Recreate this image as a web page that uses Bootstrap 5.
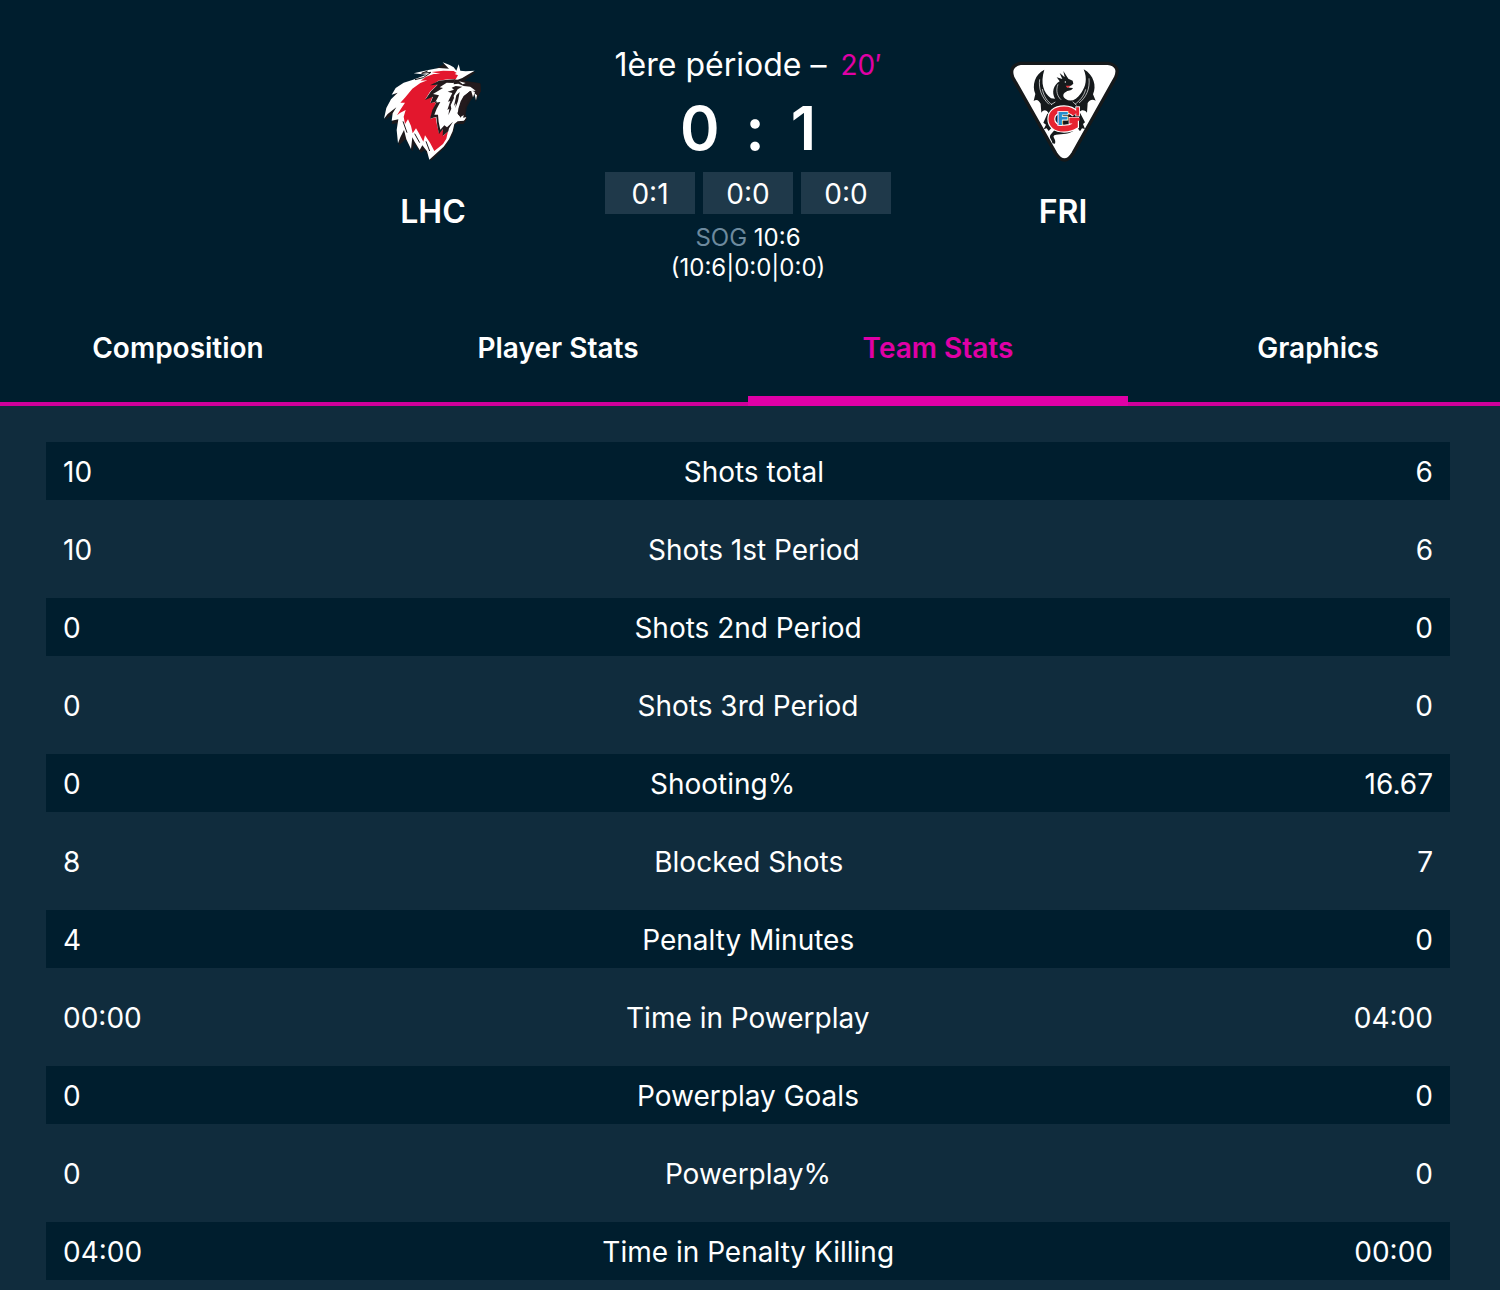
<!DOCTYPE html>
<html lang="en">
<head>
<meta charset="utf-8">
<meta name="viewport" content="width=device-width, initial-scale=1">
<title>LHC – FRI</title>
<link href="https://cdn.jsdelivr.net/npm/bootstrap@5.3.0/dist/css/bootstrap.min.css" rel="stylesheet">
<style>
  :root { --night: #001e2e; --slate: #102c3d; --tile: #1f394a; --pink: #e000a6; --line: #cf009b; }
  body { background: var(--slate); color: #fff; font-family: Inter, "Liberation Sans", sans-serif; font-size: 28px; line-height: 42px; overflow-x: hidden; }
  .match-head { background: var(--night); padding: 44px 4px 24px 0; }
  .match-inner { gap: 112px; }
  .team { width: 120px; padding-top: 8px; }
  .team svg { display: block; width: 120px; height: 120px; }
  .team-name { font-size: 32px; line-height: 40px; font-weight: 600; margin: 20px 0 0; }
  .period-title { font-size: 32px; line-height: 42px; font-weight: 400; gap: 14px; }
  .clock { font-size: 28px; color: var(--pink); }
  .score { font-size: 60px; line-height: 72px; font-weight: 600; gap: 26px; margin-top: 6px; }
  .period-box { background: var(--tile); width: 90px; height: 42px; line-height: 44px; }
  .sog { font-size: 24px; line-height: 30px; margin-top: 9px; }
  .sog-label { color: #6d8a9e; }
  .tabs { background: var(--night); border-bottom: 4px solid var(--line); }
  .tabs-inner { margin: 0 -8px 0 -12px; }
  .tabs .nav-link { color: #fff; font-weight: 600; border-radius: 0; padding: 20px 0 27px; line-height: 42px; margin-bottom: -4px; border-bottom: 10px solid transparent; }
  .tabs .nav-link.active { color: var(--pink); border-bottom-color: var(--pink); }
  .stats { padding: 36px 50px 10px 46px; }
  .stat-table { display: block; width: 100%; }
  .stat-table tbody { display: flex; flex-direction: column; gap: 20px; }
  .stat-table tr { padding: 8px 16px; height: 58px; }
  .stat-table tr:nth-child(odd) { background: var(--night); }
  .stat-table th { font-weight: 400; }
</style>
<script src="https://cdn.jsdelivr.net/npm/bootstrap@5.3.0/dist/js/bootstrap.bundle.min.js"></script>
</head>
<body>
<header class="match-head">
  <div class="match-inner d-flex justify-content-center align-items-start">
    <div class="team text-center">
      <svg viewBox="-6 6 360 360" role="img" aria-label="LHC logo">
        <path fill="#1d191b" d="M210 40L240 56 262 66 302 66 282 82 268 92 316 100 318 124 308 142 302 156 300 136 288 150 276 170 272 192 276 206 266 222 240 222 234 252 212 290 168 332 150 300 138 308 118 282 112 304 92 268 72 286 66 220 50 222 58 188 30 210 60 130Z"/>
        <path fill="#fff" d="M203 37L224 45 236 52 244 62 251 43 256 62 272 64 299 62 278 74 262 84 240 92 250 98 285 108 302 118 304 124 284 124 266 140 256 166 247 190 258 204 274 202 266 212 248 214 238 222 233 244 222 268 206 290 186 308 163 329 156 304 142 286 134 300 118 274 112 262 108 297 94 268 87 240 76 262 69 280 65 240 70 208 50 212 53 190 64 172 38 192 27 206 34 174 48 148 68 128 50 134 62 114 86 98 112 90 144 78 155 74 116 70 160 60 192 54 222 56Z"/>
        <path fill="#231a1d" d="M238 88L262 92 300 98 316 101 317 124 309 140 302 132 290 140 278 155 271 175 270 196 260 200 250 194 250 176 257 154 266 138 286 123 302 122 286 110 266 108 250 101 236 103Z"/>
        <path fill="#fff" d="M252 94L272 99 263 103ZM288 121L300 126 294 142ZM298 130L306 136 303 151ZM258 200L266 195 264 206 273 202 268 211 256 211Z"/>
        <path fill="#e3172d" d="M170 66L205 62 236 63 245 69 239 72 249 76 242 88 218 88 190 92 172 105 187 104 165 125 151 148 173 139 166 158 184 156 175 178 166 206 182 202 186 225 192 250 205 238 204 258 219 244 214 266 204 282 178 303 165 278 150 256 145 275 133 252 123 235 113 250 108 228 99 208 90 222 86 200 92 180 76 188 66 196 78 176 90 158 76 158 91 142 112 116 136 99 157 91 137 92 153 80 176 72 196 72Z"/>
        <path fill="#231a1d" d="M240 88L218 89 192 92 165 106 188 104 168 124 150 150 174 140 166 160 186 154 172 180 165 206 184 200 187 228 192 252 204 238 203 258 220 244 222 235 234 215 216 232 208 226 196 239 191 216 189 194 178 194 185 176 196 156 180 158 192 136 174 132 204 114 194 112 215 98 236 99Z"/>
        <path fill="#231a1d" d="M230 113L242 108 262 110 248 118 236 138 237 144 227 166 229 176 220 196 223 176 217 180 226 153 219 155 232 129 218 125 237 119ZM244 136L254 126 249 153 241 175 243 160 237 168Z"/>
        <path fill="none" stroke="#231a1d" stroke-width="3" d="M158 63L140 70 168 67 145 83 120 89M84 214L96 248M119 251L134 278M153 274L164 303"/>
      </svg>
      <h2 class="team-name">LHC</h2>
    </div>
    <div class="text-center match-mid">
      <div class="period-title d-flex justify-content-center align-items-center"><span>1ère période –</span><span class="clock">20′</span></div>
      <div class="score d-flex justify-content-center"><span>0</span><span>:</span><span>1</span></div>
      <div class="d-flex justify-content-center gap-2 mt-2">
        <div class="period-box">0:1</div>
        <div class="period-box">0:0</div>
        <div class="period-box">0:0</div>
      </div>
      <div class="sog"><span class="sog-label">SOG</span> 10:6<br>(10:6|0:0|0:0)</div>
    </div>
    <div class="team text-center">
      <svg viewBox="-3 0 360 360" role="img" aria-label="FRI logo">
        <path fill="#fff" stroke="#15191b" stroke-width="10" stroke-linejoin="round" d="M49 34H312Q350 40 335 76L207 304Q182 344 155 304L26 76Q14 42 49 34Z"/>
        <g fill="#15191b">
          <path d="M121 53C93 66 83 100 94 126L89 147C99 139 106 147 110 155L112 182C120 171 128 174 134 184L145 206H219L226 181C233 172 242 174 249 182L251 153C258 142 266 141 275 146L267 127C278 103 270 69 239 52C251 80 245 105 232 122C216 145 200 151 185 141C174 133 176 124 190 117C200 116 205 113 207 108L198 107 188 104 201 101 208 95 206 86 193 80 178 57 182 76 167 63 175 81 158 76 167 88C148 99 142 122 153 140L141 139C119 121 108 95 121 53Z"/>
          <path d="M130 185L118 212 126 218 119 232 128 229 134 237 145 225 219 226 228 238 234 229 243 231 237 216 243 211 228 182Z"/>
          <path d="M151 235C166 241 187 239 208 237C189 249 165 245 151 250C143 256 158 262 153 275L145 274C146 264 134 260 139 249Z"/>
        </g>
        <path fill="none" stroke="#fff" stroke-width="2" d="M107 82C103 109 113 137 135 157M115 111C119 135 132 150 144 158M255 79C258 110 247 136 225 153M245 112C239 136 225 147 213 157M162 97C154 117 161 134 171 143M141 158L154 150M206 149L218 160"/>
        <path fill="#e83b42" d="M185 101L201 101 190 108Z"/>
        <circle cx="184" cy="90" r="2" fill="#fff"/>
        <ellipse cx="180" cy="201" rx="44" ry="34" fill="#15191b"/>
        <g fill="none">
          <path stroke="#fff" stroke-width="24" d="M214 186C202 172 190 172 180 172C153 172 142 185 142 201C142 218 155 230 180 230C194 230 205 226 213 221V207H194"/>
          <path stroke="#fff" stroke-width="14" d="M221 163V193"/>
          <path stroke="#e62330" stroke-width="17" d="M214 186C202 172 190 172 180 172C153 172 142 185 142 201C142 218 155 230 180 230C194 230 205 226 213 221V206H196"/>
          <path stroke="#e62330" stroke-width="9" d="M221 166V191M198 202H227"/>
        </g>
        <text x="158" y="220" font-family="DejaVu Sans" font-weight="700" font-size="54" fill="#258dcc" stroke="#fff" stroke-width="5" paint-order="stroke">F</text>
      </svg>
      <h2 class="team-name">FRI</h2>
    </div>
  </div>
</header>
<nav class="tabs" aria-label="Match sections">
  <div class="tabs-inner nav nav-justified flex-nowrap">
    <a class="nav-link nav-item" href="#composition">Composition</a>
    <a class="nav-link nav-item" href="#players">Player Stats</a>
    <a class="nav-link nav-item active" aria-current="page" href="#team">Team Stats</a>
    <a class="nav-link nav-item" href="#graphics">Graphics</a>
  </div>
</nav>
<main class="stats" id="team">
  <table class="stat-table">
    <tbody>
      <tr class="d-flex justify-content-between"><td>10</td><th scope="row">Shots total</th><td>6</td></tr>
      <tr class="d-flex justify-content-between"><td>10</td><th scope="row">Shots 1st Period</th><td>6</td></tr>
      <tr class="d-flex justify-content-between"><td>0</td><th scope="row">Shots 2nd Period</th><td>0</td></tr>
      <tr class="d-flex justify-content-between"><td>0</td><th scope="row">Shots 3rd Period</th><td>0</td></tr>
      <tr class="d-flex justify-content-between"><td>0</td><th scope="row">Shooting%</th><td>16.67</td></tr>
      <tr class="d-flex justify-content-between"><td>8</td><th scope="row">Blocked Shots</th><td>7</td></tr>
      <tr class="d-flex justify-content-between"><td>4</td><th scope="row">Penalty Minutes</th><td>0</td></tr>
      <tr class="d-flex justify-content-between"><td>00:00</td><th scope="row">Time in Powerplay</th><td>04:00</td></tr>
      <tr class="d-flex justify-content-between"><td>0</td><th scope="row">Powerplay Goals</th><td>0</td></tr>
      <tr class="d-flex justify-content-between"><td>0</td><th scope="row">Powerplay%</th><td>0</td></tr>
      <tr class="d-flex justify-content-between"><td>04:00</td><th scope="row">Time in Penalty Killing</th><td>00:00</td></tr>
    </tbody>
  </table>
</main>
</body>
</html>
